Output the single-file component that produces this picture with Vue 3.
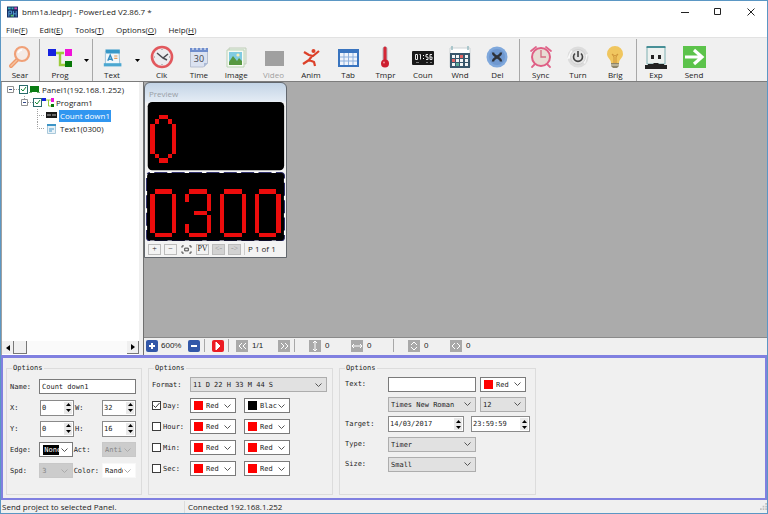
<script setup>
import { ref } from 'vue'

const menus = [
  ['File', 'F'],
  ['Edit', 'E'],
  ['Tools', 'T'],
  ['Options', 'O'],
  ['Help', 'H']
]

const icons = {
  search: '<path d="M10 14 3 21" stroke="#ef9a6c" stroke-width="4" stroke-linecap="round"/><path d="M10 14 3 21" stroke="#f6c3a0" stroke-width="1.4" stroke-linecap="round"/><circle cx="14" cy="9" r="7" fill="#f5ebe6" stroke="#f0a077" stroke-width="2.2"/><path d="M10 8a4.500 4.500 0 0 1 4-3" stroke="#fff" stroke-width="1.400" fill="none"/>',
  program: '<path d="M8 8h8M12 8v12h5" stroke="#9ccc3c" stroke-width="2.4" fill="none"/><path fill="#1522e0" d="M0 4h8v7H0z"/><path fill="#f011d8" d="M17 4h7v7h-7z"/><path fill="#087808" d="M17 16h7v6h-7z"/>',
  text: '<g transform="translate(3 3) scale(.8)"><path d="M3 4h17l1 17H3z" fill="#f0f7fb" stroke="#8bb6cf"/><path d="M3 2h18v5H4z" fill="#3798c8"/><path d="M1 19h22v4H1z" fill="#4ba7d1"/><path d="M6 16l3-7 3 7M7 14h4" stroke="#348cc0" stroke-width="1.800" fill="none"/><path d="M14 10h4M14 13h4" stroke="#e59a53" stroke-width="1.500"/></g>',
  clock: '<circle cx="12" cy="12" r="10" fill="#ececef" stroke="#e2585d" stroke-width="2.600"/><path d="m7 8 6 5 5-4M13 13l4 2" stroke="#4b4b52" stroke-width="1.500" fill="none"/><path d="M12 4v1M12 19v1M4 12h1M19 12h1" stroke="#888"/>',
  time: '<path d="M3.500 4h17v14l-4 4h-13z" fill="#dbe2f1" stroke="#b7bfd0"/><path d="M3 3h18v4H3z" fill="#6f8dcd"/><path d="M6 2v3M10 2v3M14 2v3M18 2v3" stroke="#fff"/><path d="M21 18h-4v4z" fill="#aab9d5"/><text x="12" y="17" text-anchor="middle" font-size="9" font-family="Open Sans, sans-serif" fill="#45474c">30</text>',
  image: '<path d="M5 3h17v16H5z" fill="#e8f0e7" stroke="#c0ceb9"/><path d="M3 5h17v17H3z" fill="#f8faf4" stroke="#bad3b5"/><path d="M5 7h13v12H5z" fill="#80cbe1"/><circle cx="14" cy="10" r="1.600" fill="#f7efb7"/><path d="m5 17 4-6 4 5 2-3 3 3v4H5z" fill="#579841"/>',
  video: '<path fill="#a0a0a0" d="M3 6h19v15H3z"/>',
  anim: '<circle cx="14.500" cy="6" r="2" fill="#dc4029"/><path d="m5 7 5 3 4 1 6-5M13 11l-3 4-6 4M10 15l5 2 1 4" stroke="#dc4029" stroke-width="2.200" fill="none" stroke-linejoin="round"/>',
  table: '<path fill="#3974bf" d="M2 4h21v18H2z"/><path fill="#eff4fc" d="M4 8h17v12H4z"/><path d="M4 12h17M4 16h17M8 8v12M12.500 8v12M17 8v12" stroke="#8eb0dc"/>',
  temp: '<path d="M12 4v13" stroke="#b4b6bd" stroke-width="5" stroke-linecap="round"/><path d="M12 3v14" stroke="#d52736" stroke-width="3" stroke-linecap="round"/><circle cx="12" cy="18.500" r="4" fill="#cd1f30"/><circle cx="11" cy="17.500" r="1" fill="#f29099"/>',
  count: '<rect x="1" y="6" width="22" height="14" rx="1" fill="#191919"/><path d="M4.500 9.500h2v5h-2zM8.500 9.500h1v5M17 9.500h-2v2.500h2v2.500h-2M21 9.500h-2v5h2V12h-2" stroke="#e5e5e5" stroke-width="1" fill="none"/><path d="M12.500 10v1M12.500 13v1" stroke="#fff"/><path d="M5 17.500h3M15 17.500h2M19 17.500h2" stroke="#999" stroke-width=".8"/>',
  calendar: '<path fill="#fff" stroke="#ccd2d5" d="M2 3h20v19H2z"/><path fill="#38576c" d="M2 8h20v15H2z"/><path d="M4 1v4M20 1v4" stroke="#98bcc2" stroke-width="1.500"/><path fill="#f4f6f7" d="M4 10h3v3H4zM8 10h3v3H8zM17 10h3v3h-3zM8 14h3v3H8zM12 14h3v3h-3zM17 14h3v3h-3zM4 18h3v3H4zM12 18h3v3h-3zM17 18h3v3h-3z"/><path fill="#e36565" d="M12 10h3v3h-3zM4 14h3v3H4z"/><path fill="#5aad9b" d="M8 18h3v3H8z"/>',
  del: '<circle cx="12" cy="12" r="10.500" fill="#7fa8dc"/><circle cx="12" cy="12" r="8" fill="#6f98d0"/><path d="M8 7.500c0 3 2.500 3 4 4.500 1.500-1.500 4-1.500 4-4.500M8 16.500c0-3 2.500-3 4-4.500 1.500 1.500 4 1.500 4 4.500" stroke="#2d3138" stroke-width="2.400" fill="none"/>',
  alarm: '<path d="M6 19l-3 3M18 19l3 3M2 6l5-4M22 6l-5-4" stroke="#e0648a" stroke-width="1.800" stroke-linecap="round"/><circle cx="12" cy="12" r="9" fill="#e8ddd5" stroke="#df5e84" stroke-width="2"/><path d="M12 5v7h5" stroke="#d56c83" stroke-width="1.300" fill="none"/>',
  power: '<circle cx="12" cy="12" r="10.500" fill="#dcdcdc"/><path d="M5 5 12 12 1 14zM19 19 12 12 22 9z" fill="#f8f8f8"/><circle cx="12" cy="12" r="7.500" fill="#e4e4e4" stroke="#c6c6c6" stroke-width=".6"/><path d="M9 8.500a4.500 4.500 0 1 0 6 0M12 6v6" stroke="#424242" stroke-width="1.600" fill="none"/>',
  bulb: '<path d="M12 1a8 8 0 0 0-8 8c0 4 4 5 4 9h8c0-4 4-5 4-9a8 8 0 0 0-8-8z" fill="#f0c65f"/><path d="m9 9 2 3v6M15 9l-2 3v6M9 9l3 2 3-2" stroke="#cf9439" stroke-width="1" fill="none"/><path d="M8 18h8v3l-2 2h-4l-2-2z" fill="#8e8568"/><path d="M8 20h8" stroke="#e5dfc9"/>',
  usb: '<path fill="#edf1ef" stroke="#7fb0b2" d="M3 2h18v17H3z"/><path d="M2.500 2h19" stroke="#247b84" stroke-width="1.500"/><path fill="#232323" d="M7 10h3v4H7zM14 10h3v4h-3zM1 20h3v-1h5l1-1h4l1 1h5v1h3v4H1z"/>',
  send: '<path fill="#5cc34b" d="M1 1h23v22H1z"/><path d="M3 12h15M12 5l8 7-8 7" stroke="#fff" stroke-width="3.200" fill="none"/>'
}

const groups = [
  { size: 'one', items: [['Sear', 'search']] },
  { size: 'drop', items: [['Prog', 'program']], drop: true },
  { size: 'drop open', items: [['Text', 'text']], drop: true },
  {
    size: 'ten',
    items: [
      ['Clk', 'clock'], ['Time', 'time'], ['Image', 'image'], ['Video', 'video'], ['Anim', 'anim'],
      ['Tab', 'table'], ['Tmpr', 'temp'], ['Coun', 'count'], ['Wnd', 'calendar'], ['Del', 'del']
    ]
  },
  { size: 'three', items: [['Sync', 'alarm'], ['Turn', 'power'], ['Brig', 'bulb']] },
  { size: 'two open', items: [['Exp', 'usb'], ['Send', 'send']] }
]

const zero = 'M1 0h4v1H1zM0 1h1v9H0zM5 1h1v9H5zM1 10h4v1H1z'
const ovalZero = 'M2 0h2v1H2zM1 1h1v1H1zM4 1h1v1H4zM0 2h1v7H0zM5 2h1v7H5zM1 9h1v1H1zM4 9h1v1H4zM2 10h2v1H2z'
const three = 'M1 0h4v1H1zM0 1h1v2H0zM5 1h1v4H5zM2 5h3v1H2zM5 6h1v4H5zM0 8h1v2H0zM1 10h4v1H1z'
const digits = [zero, three, zero, zero]

const pager = [
  { icon: 'M6 3 3 6l3 3M10 3 7 6l3 3', label: '1/1', title: 'Previous', cls: 'prev' },
  { icon: 'M3 3l3 3-3 3M7 3l3 3-3 3', label: '', title: 'Next', cls: 'next' },
  { icon: 'M6 1v10M4 3l2-2 2 2M4 9l2 2 2-2', label: '0', title: 'Vertical offset', cls: '' },
  { icon: 'M1 6h10M3 4 1 6l2 2M9 4l2 2-2 2', label: '0', title: 'Horizontal offset', cls: 'last' },
  { icon: 'M3 5l3-3 3 3M3 7l3 3 3-3', label: '0', title: 'Height', cls: '' },
  { icon: 'M5 3 2 6l3 3M7 3l3 3-3 3', label: '0', title: 'Width', cls: '' }
]

const name = ref('Count down1')
const caption = ref('')
const spins = ref([
  [{ id: 'pos-x', label: 'X:', value: '0' }, { id: 'size-w', label: 'W:', value: '32' }],
  [{ id: 'pos-y', label: 'Y:', value: '0' }, { id: 'size-h', label: 'H:', value: '16' }]
])
const units = ref([
  { label: 'Day:', on: true, colors: ['Red', 'Black'] },
  { label: 'Hour:', on: false, colors: ['Red', 'Red'] },
  { label: 'Min:', on: false, colors: ['Red', 'Red'] },
  { label: 'Sec:', on: false, colors: ['Red', 'Red'] }
])
const date = ref('14/03/2017')
const time = ref('23:59:59')
</script>

<template>
  <div class="window">
    <header class="title">
      <svg class="logo" viewBox="0 0 12 12"><path fill="#172f65" d="M0 0h12v12H0z" /><path fill="#36b6bb" d="M1 1h3v2H1zM5 1h2v2H5z" /><path fill="#d34ab0" d="M8 1h3v2H8z" /><path d="M2 5v6M2 5h3v3H2M7 5v6M10 5v6M7 8h3" stroke="#58a5dc" fill="none" /><path fill="#57c16a" d="M4 9h3v2H4z" /></svg>
      <h1>bnm1a.ledprj - PowerLed V2.86.7 *</h1>
      <div class="sys">
        <button aria-label="Minimize"><svg viewBox="0 0 8 8"><path d="M0 4.500h8" /></svg></button>
        <button aria-label="Maximize"><svg viewBox="0 0 8 8"><path d="M.5.5h6v6h-6z" /></svg></button>
        <button aria-label="Close"><svg viewBox="0 0 8 8"><path d="m.5.5 7 7M7.500.5l-7 7" /></svg></button>
      </div>
    </header>

    <nav class="menu">
      <button v-for="[label, key] in menus" :key="key">{{ label }}(<u>{{ key }}</u>)</button>
    </nav>

    <div class="tools">
      <div v-for="(group, i) in groups" :key="i" class="group" :class="group.size">
        <button v-for="[label, icon] in group.items" :key="label" class="tool" :disabled="label === 'Video'">
          <svg viewBox="0 0 24 24" v-html="icons[icon]"></svg>
          <span>{{ label }}</span>
        </button>
        <button v-if="group.drop" class="more" aria-label="More"><svg viewBox="0 0 5 3"><path d="M0 0h5L2.500 3z" /></svg></button>
      </div>
    </div>

    <main class="work">
      <aside class="tree">
        <ul>
          <li>
            <svg class="twig" width="12" height="13" viewBox="0 0 12 13"><path class="line" d="M7 6.500h5" /><path class="knob" d="M.5 3.500h6v6h-6z" /><path class="sign" d="M2 6.500h3" /></svg>
            <span class="check"><input type="checkbox" checked aria-label="Panel1" /><svg viewBox="0 0 9 9"><path class="tick green" d="m2 4 2 2 3-4" /></svg></span>
            <svg class="pic" width="13" height="9" viewBox="0 0 13 9"><path fill="#0b7d14" d="M2 1h9v6H2z" /><path fill="#74b37a" d="M1 7h3v1H1zM9 7h3v1H9z" /></svg>
            <span class="node">Panel1(192.168.1.252)</span>
          </li>
          <li>
            <svg class="twig" width="26" height="13" viewBox="0 0 26 13"><path class="line" d="M17.500 0v3M21 6.500h5" /><path class="knob" d="M14.500 3.500h6v6h-6z" /><path class="sign" d="M16 6.500h3" /></svg>
            <span class="check"><input type="checkbox" checked aria-label="Program1" /><svg viewBox="0 0 9 9"><path class="tick green" d="m2 4 2 2 3-4" /></svg></span>
            <svg class="pic" width="13" height="11" viewBox="0 0 13 11"><path d="M4 3h5M6.500 3v6H9" stroke="#9ccc3c" fill="none" /><path fill="#1522e0" d="M0 1h4v3H0z" /><path fill="#f011d8" d="M9 1h3v4H9z" /><path fill="#087808" d="M9 7h3v3H9z" /></svg>
            <span class="node">Program1</span>
          </li>
          <li>
            <svg class="twig" width="38" height="13" viewBox="0 0 38 13"><path class="line" d="M30.500 0v13M30 6.500h8" /></svg>
            <svg class="pic" width="14" height="7" viewBox="0 0 14 7"><path fill="#191919" d="M1 0h11v6H1z" /><path d="M3 2v2M5 2v2M8 2v2M10 2v2" stroke="#bbb" /></svg>
            <span class="node selected">Count down1</span>
          </li>
          <li>
            <svg class="twig" width="38" height="13" viewBox="0 0 38 13"><path class="line" d="M30.500 0v6.500H38" /></svg>
            <svg class="pic" width="14" height="10" viewBox="0 0 14 10"><path fill="#e8f2f8" stroke="#a9c8da" d="M2.500.5h8v9h-8z" /><path fill="#3d94c6" d="M2 0h9v2H2z" /><path d="M4 5h5M4 7h3" stroke="#4b9ac9" /></svg>
            <span class="node">Text1(0300)</span>
          </li>
        </ul>
        <div class="scroll">
          <button aria-label="Scroll left"><svg viewBox="0 0 4 6"><path d="M4 0v6L0 3z" /></svg></button>
          <span class="thumb"></span>
          <button class="end" aria-label="Scroll right"><svg viewBox="0 0 4 6"><path d="M0 0v6l4-3z" /></svg></button>
        </div>
      </aside>

      <section class="stage">
        <div class="canvas">
          <div class="preview">
            <h2>Preview</h2>
            <svg class="led" viewBox="0 0 32 16"><rect x=".4" width="31.400" height="15.700" rx="1" /><path class="lit" :d="ovalZero" transform="translate(1 3)" /></svg>
            <svg class="led" viewBox="0 0 32 16">
              <rect class="frame" x=".1" y=".1" width="31.800" height="15.800" rx=".8" />
              <rect class="dash" x=".1" y=".1" width="31.800" height="15.800" rx=".8" />
              <path v-for="(d, i) in digits" :key="i" class="lit" :d="d" :transform="`translate(${1 + i * 8} 4)`" />
            </svg>
            <div class="keys">
              <button>+</button>
              <button>−</button>
              <button class="fit" aria-label="Fit"><svg viewBox="0 0 12 10"><path d="M1 3V1h2M9 1h2v2M11 7v2H9M3 9H1V7M4 3.500h4v3H4z" /></svg></button>
              <button>PV</button>
              <button disabled>&lt;-</button>
              <button disabled>-&gt;</button>
              <span>P 1 of 1</span>
            </div>
          </div>
        </div>
        <div class="bar">
          <button class="blue" aria-label="Zoom in"><svg viewBox="0 0 12 12"><path d="M6 3v6M3 6h6" stroke-width="2" /></svg></button>
          <span class="zoom">600%</span>
          <button class="blue" aria-label="Zoom out"><svg viewBox="0 0 12 12"><path d="M3 6h6" stroke-width="2" /></svg></button>
          <i></i>
          <button class="play" aria-label="Play"><svg viewBox="0 0 12 12"><path d="M4 2v8l4-4z" fill="#fff" /></svg></button>
          <i></i>
          <template v-for="(p, n) in pager" :key="p.title">
            <button class="grey" :aria-label="p.title"><svg viewBox="0 0 12 12"><path :d="p.icon" /></svg></button>
            <span v-if="p.label" class="count" :class="p.cls">{{ p.label }}</span>
            <i v-if="n === 1 || n === 3"></i>
          </template>
        </div>
      </section>
    </main>

    <section class="options">
      <fieldset class="basic">
        <legend>Options</legend>
        <div class="row">
          <label for="name">Name:</label>
          <input id="name" v-model="name" class="box wide" type="text" />
        </div>
        <div v-for="(pair, r) in spins" :key="r" class="row">
          <template v-for="s in pair" :key="s.id">
            <label :for="s.id">{{ s.label }}</label>
            <span class="spin">
              <input :id="s.id" v-model="s.value" type="text" />
              <span class="steps"><button aria-label="Increase"><svg viewBox="0 0 5 3"><path d="M0 3h5L2.500 0z" /></svg></button><button aria-label="Decrease"><svg viewBox="0 0 5 3"><path d="M0 0h5L2.500 3z" /></svg></button></span>
            </span>
          </template>
        </div>
        <div class="row">
          <label for="edge">Edge:</label>
          <span class="pick white marked"><select id="edge"><option>None</option></select><svg viewBox="0 0 7 4"><path d="m.5.5 3 3 3-3" /></svg></span>
          <label for="act">Act:</label>
          <span class="pick off"><select id="act" disabled><option>Anti</option></select><svg viewBox="0 0 7 4"><path d="m.5.5 3 3 3-3" /></svg></span>
        </div>
        <div class="row">
          <label for="spd">Spd:</label>
          <span class="pick off"><select id="spd" disabled><option>3</option></select><svg viewBox="0 0 7 4"><path d="m.5.5 3 3 3-3" /></svg></span>
          <label for="color">Color:</label>
          <span class="pick white plain"><select id="color"><option>Random</option></select><svg viewBox="0 0 7 4"><path d="m.5.5 3 3 3-3" /></svg></span>
        </div>
      </fieldset>

      <fieldset class="format">
        <legend>Options</legend>
        <div class="row">
          <label for="format">Format:</label>
          <span class="pick long"><select id="format"><option>11 D 22 H 33 M 44 S</option></select><svg viewBox="0 0 7 4"><path d="m.5.5 3 3 3-3" /></svg></span>
        </div>
        <div v-for="u in units" :key="u.label" class="row">
          <label class="unit">
            <span class="check"><input v-model="u.on" type="checkbox" /><svg v-if="u.on" viewBox="0 0 9 9"><path class="tick" d="m1.500 4.500 2 2 4-4.500" /></svg></span>
            {{ u.label }}
          </label>
          <span v-for="(c, k) in u.colors" :key="k" class="pick white tint">
            <b class="swatch" :class="c.toLowerCase()"></b>
            <select v-model="u.colors[k]" :aria-label="u.label + ' color'"><option>Red</option><option>Black</option></select>
            <svg viewBox="0 0 7 4"><path d="m.5.5 3 3 3-3" /></svg>
          </span>
        </div>
      </fieldset>

      <fieldset class="target">
        <legend>Options</legend>
        <div class="row">
          <label for="caption">Text:</label>
          <input id="caption" v-model="caption" class="box" type="text" />
          <span class="pick white tint"><b class="swatch red"></b><select aria-label="Text color"><option>Red</option></select><svg viewBox="0 0 7 4"><path d="m.5.5 3 3 3-3" /></svg></span>
        </div>
        <div class="row">
          <label for="font">&nbsp;</label>
          <span class="pick mid"><select id="font" aria-label="Font"><option>Times New Roman</option></select><svg viewBox="0 0 7 4"><path d="m.5.5 3 3 3-3" /></svg></span>
          <span class="pick small"><select aria-label="Font size"><option>12</option></select><svg viewBox="0 0 7 4"><path d="m.5.5 3 3 3-3" /></svg></span>
        </div>
        <div class="row">
          <label for="date">Target:</label>
          <span class="spin date"><input id="date" v-model="date" type="text" /><span class="steps"><button aria-label="Later date"><svg viewBox="0 0 5 3"><path d="M0 3h5L2.500 0z" /></svg></button><button aria-label="Earlier date"><svg viewBox="0 0 5 3"><path d="M0 0h5L2.500 3z" /></svg></button></span></span>
          <span class="spin clock"><input v-model="time" aria-label="Target time" type="text" /><span class="steps"><button aria-label="Later time"><svg viewBox="0 0 5 3"><path d="M0 3h5L2.500 0z" /></svg></button><button aria-label="Earlier time"><svg viewBox="0 0 5 3"><path d="M0 0h5L2.500 3z" /></svg></button></span></span>
        </div>
        <div class="row">
          <label for="type">Type:</label>
          <span class="pick mid"><select id="type"><option>Timer</option></select><svg viewBox="0 0 7 4"><path d="m.5.5 3 3 3-3" /></svg></span>
        </div>
        <div class="row">
          <label for="size">Size:</label>
          <span class="pick mid"><select id="size"><option>Small</option></select><svg viewBox="0 0 7 4"><path d="m.5.5 3 3 3-3" /></svg></span>
        </div>
      </fieldset>
    </section>

    <footer class="status">
      <span class="hint">Send project to selected Panel.</span>
      <span class="link">Connected 192.168.1.252</span>
      <svg class="grip" viewBox="0 0 8 8"><path d="M6 0h2v2H6zM3 3h2v2H3zM6 3h2v2H6zM0 6h2v2H0zM3 6h2v2H3zM6 6h2v2H6z" /></svg>
    </footer>
  </div>
</template>

<style>
body {
  margin: 0;
}
</style>

<style scoped>
* {
  box-sizing: border-box;
}
.window {
  display: flex;
  flex-direction: column;
  min-height: 100vh;
  border: 1px solid #5b97c4;
  background: #f0f0f0;
  color: #1c1c1c;
  font: 8px/12px "Open Sans", sans-serif;
}
button,
input,
select {
  margin: 0;
  padding: 0;
  border: 0;
  border-radius: 0;
  background: none;
  color: inherit;
  font: inherit;
}
svg {
  display: block;
}

.title {
  display: flex;
  align-items: center;
  height: 21px;
  padding-left: 6px;
  background: #fff;
}
.logo {
  width: 11px;
  height: 12px;
}
h1 {
  flex: 1;
  margin: 0 0 0 4px;
  font-size: 8px;
  font-weight: 400;
}
.sys {
  display: flex;
}
.sys button {
  display: grid;
  place-items: center;
  width: 33px;
  height: 21px;
}
.sys svg {
  width: 8px;
  height: 8px;
  fill: none;
  stroke: #222;
}

.menu {
  display: flex;
  gap: 12px;
  height: 16px;
  padding: 0 5px 1px;
  border-bottom: 1px solid #e2e2e2;
  background: #fff;
}
.menu button {
  line-height: 13px;
}

.tools {
  display: flex;
  height: 44px;
  padding-top: 1px;
  border-bottom: 1px solid #7c7c7c;
}
.group {
  display: flex;
  border-right: 1px solid #a8a8a8;
}
.group.open {
  border-right: 0;
}
.one {
  width: 39px;
}
.drop {
  width: 53px;
}
.drop.open {
  width: 50px;
}
.ten {
  width: 377px;
  padding-right: 3px;
}
.three {
  width: 117px;
  padding: 0 2px;
}
.two {
  width: 76px;
}
.tool {
  display: flex;
  flex: 1;
  flex-direction: column;
  align-items: center;
  justify-content: flex-end;
}
.tool svg {
  width: 24px;
  height: 24px;
  fill: none;
}
.tool:disabled {
  color: #a0a0a0;
}
.more {
  display: grid;
  place-items: center;
  width: 12px;
}
.more svg {
  width: 5px;
  height: 3px;
}

.work {
  display: flex;
  flex: 1;
}
.tree {
  display: flex;
  flex-direction: column;
  justify-content: space-between;
  width: 138px;
  border-left: 1px solid #a0a0a0;
  background: #fff;
}
.tree ul {
  margin: 0;
  padding: 1px 0 0 5px;
  list-style: none;
}
.tree li {
  display: flex;
  align-items: center;
  height: 13px;
}
.twig {
  fill: none;
}
.line {
  stroke: #a0a0a0;
  stroke-dasharray: 1 1;
}
.knob {
  stroke: #919191;
}
.sign {
  stroke: #334a8a;
}
.check {
  display: grid;
  width: 9px;
  height: 9px;
}
.check > * {
  grid-area: 1 / 1;
  width: 100%;
  height: 100%;
}
.check input {
  border: 1px solid #3c3c3c;
  background: #fff;
  appearance: none;
}
.tree .check input {
  border-color: #2a6c6c;
}
.check svg {
  pointer-events: none;
}
.tick {
  fill: none;
  stroke: #333;
}
.tick.green {
  stroke: #128a35;
}
.node {
  padding: 0 1px;
  line-height: 12px;
}
.selected {
  background: #3096f0;
  color: #fff;
}
.scroll {
  display: flex;
  height: 13px;
  margin-bottom: 1px;
  background: #fafafa;
}
.scroll button {
  display: grid;
  place-items: center;
  width: 12px;
  border-right: 1px solid #777;
  background: #f0f0f0;
}
.scroll svg {
  width: 4px;
  height: 6px;
}
.thumb {
  width: 13px;
  border-right: 1px solid #777;
  border-bottom: 1px solid #777;
  background: #f0f0f0;
}
.scroll .end {
  margin-left: auto;
  border-bottom: 1px solid #777;
}

.stage {
  display: flex;
  flex: 1;
  flex-direction: column;
  margin-left: 4px;
  border-left: 1px solid #707070;
}
.canvas {
  flex: 1;
  border-bottom: 1px solid #8a8a8a;
  background: #ababab;
}
.preview {
  width: 143px;
  padding: 0 1px;
  border: 1px solid #62676d;
  border-radius: 6px 6px 0 0;
  background: linear-gradient(#c3d4e6, #e3ebf4 18px, #f3f3f3 20px);
}
h2 {
  margin: 0;
  padding: 5px 0 2px 3px;
  color: #9a9fa6;
  font-size: 8px;
  font-weight: 400;
  line-height: 12px;
}
.led {
  width: 100%;
}
.frame {
  stroke: #21216b;
  stroke-width: .2;
}
.dash {
  fill: none;
  stroke: #fff;
  stroke-width: .3;
  stroke-dasharray: 1 3;
}
.lit {
  fill: #ec0c0c;
  shape-rendering: crispEdges;
}
.keys {
  display: flex;
  gap: 3px;
  align-items: center;
  height: 16px;
  padding: 0 2px;
}
.keys button {
  width: 13px;
  height: 11px;
  border: 1px solid #bcbcbc;
  background: #f3f3f3;
  font: 8px/8px "Liberation Serif", serif;
}
.keys .fit {
  border-color: transparent;
}
.fit svg {
  width: 11px;
  height: 9px;
  fill: none;
  stroke: #333;
}
.keys button:disabled {
  background: #d2d2d2;
  color: #999;
}
.keys span {
  padding-left: 3px;
  border-left: 1px solid #ccc;
  white-space: nowrap;
}

.bar {
  display: flex;
  align-items: center;
  height: 17px;
  padding: 0 0 2px 2px;
  font: 8px/12px "Liberation Sans", sans-serif;
}
.bar button {
  width: 12px;
  height: 12px;
  border-radius: 2px;
}
.bar svg {
  fill: none;
  stroke: #fff;
}
.bar i {
  width: 1px;
  height: 13px;
  margin: 0 7px 0 4px;
  background: #a8a8a8;
}
.blue {
  background: #3257a8;
}
.play {
  background: #ec1c24;
}
.bar .grey {
  border-radius: 0;
  background: #a9a9a9;
}
.zoom {
  width: 30px;
  padding-left: 3px;
}
.count {
  width: 30px;
  padding-left: 4px;
}
.bar .grey + i {
  margin-right: 14px;
}
.bar .last + i {
  margin: 0 14px 0 0;
}

.options {
  display: flex;
  gap: 6px;
  align-items: flex-start;
  height: 145px;
  padding: 4px 4px 0 3px;
  border: 2px solid #8080e0;
  border-top-width: 3px;
  font: 7px/14px "DejaVu Sans Mono", "Liberation Mono", monospace;
}
fieldset {
  display: flex;
  flex-direction: column;
  height: 133px;
  margin: 0;
  padding: 0 5px 0 3px;
  border: 1px solid #dcdcdc;
}
legend {
  margin-left: 2px;
  padding: 0 1px;
  line-height: 12px;
}
.basic {
  width: 136px;
  padding-top: 2px;
}
.format {
  width: 185px;
}
.target {
  width: 194px;
}
.row {
  display: flex;
  align-items: center;
  height: 21px;
}
.target .row {
  height: 20px;
}
.basic .row {
  justify-content: space-between;
}
.basic label {
  width: 29px;
}
.spin ~ label {
  width: 26px;
}
.pick ~ label {
  width: 28px;
}
.box {
  height: 15px;
  padding-left: 2px;
  border: 1px solid #7a7a7a;
  background: #fff;
}
.box.wide {
  flex: 1;
  min-width: 0;
}
.spin {
  display: flex;
  width: 34px;
  height: 16px;
  border: 1px solid #8a8a8a;
  background: #fff;
}
.spin input {
  flex: 1;
  min-width: 0;
  padding-left: 1px;
}
.steps {
  display: grid;
  width: 10px;
  padding: 1px;
}
.steps button {
  display: grid;
  place-items: center;
  background: #e9e9e9;
}
.steps svg {
  width: 5px;
  height: 3px;
}
.pick {
  display: grid;
  grid-template-columns: 1fr 13px;
  align-items: center;
  width: 34px;
  height: 15px;
  border: 1px solid #adadad;
  background: #e1e1e1;
}
.pick select {
  grid-area: 1 / 1 / 2 / 3;
  width: 100%;
  height: 13px;
  padding: 0 12px 0 2px;
  overflow: hidden;
  appearance: none;
}
.pick svg {
  grid-area: 1 / 2;
  width: 7px;
  height: 4px;
  margin-left: 2px;
  fill: none;
  stroke: #555;
  pointer-events: none;
}
.pick.white {
  border-color: #7a7a7a;
  background: #fff;
}
.pick.white.plain {
  border-color: #f8f8f8;
}
.pick.off {
  border-color: #c8c8c8;
  background: #cccccc;
  color: #858585;
}
.pick.off select {
  opacity: 1;
}
.pick.off svg,
.pick.plain svg {
  stroke: #aaa;
}
.marked select {
  width: 16px;
  height: 10px;
  margin-left: 3px;
  padding: 0 0 0 1px;
  background: #000;
  color: #fff;
  line-height: 10px;
}
.tint,
.small {
  width: 46px;
}
.tint select {
  padding-left: 15px;
}
.swatch {
  z-index: 1;
  grid-area: 1 / 1;
  width: 9px;
  height: 9px;
  margin-left: 3px;
  pointer-events: none;
}
.red {
  background: #f00;
}
.black {
  background: #000;
}
.format label {
  width: 38px;
}
.long {
  flex: 1;
}
.format label.unit {
  display: flex;
  gap: 2px;
  align-items: center;
  width: 38px;
}
.unit .check {
  flex: none;
}
.format .tint + .tint {
  margin-left: 8px;
}
.target label {
  width: 45px;
  padding-left: 2px;
}
.target .box,
.mid {
  width: 88px;
}
.target .box + .pick,
.mid + .small {
  margin-left: 4px;
}
.date {
  width: 76px;
}
.clock {
  width: 59px;
  margin-left: 7px;
}

.status {
  display: flex;
  align-items: center;
  height: 13px;
}
.hint {
  width: 184px;
  padding-left: 1px;
  border-right: 1px solid #dcdcdc;
}
.link {
  flex: 1;
  padding-left: 3px;
}
.grip {
  width: 7px;
  height: 7px;
  fill: #c0c0c0;
}
</style>
